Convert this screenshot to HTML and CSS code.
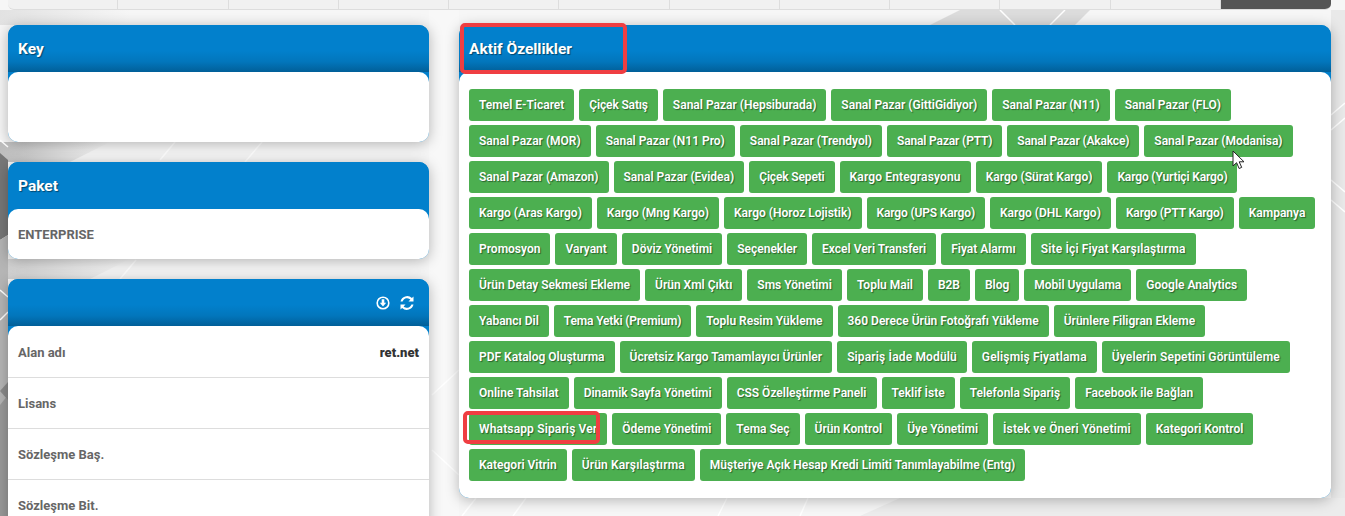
FILE: index.html
```html
<!DOCTYPE html>
<html lang="tr">
  <head>
    <meta charset="UTF-8">
    <meta name="viewport" content="width=device-width, initial-scale=1.0">
    <title>Aktif Özellikler</title>
    <link rel="stylesheet" href="styles.css">
  </head>
  <body>
    <svg class="backdrop" viewBox="0 0 1345 516" aria-hidden="true">
      <defs>
        <linearGradient id="fade" x1="0" x2="1" y1="0" y2="0">
          <stop offset="0" stop-color="#bdbdbd"/>
          <stop offset="1" stop-color="#f6f6f6"/>
        </linearGradient>
      </defs>
      <polygon points="0,10 130,10 130,25 0,25" fill="url(#fade)" opacity="0.35"/>
      <polygon points="0,142 110,142 70,162 0,162" fill="url(#fade)"/>
      <polygon points="0,259 130,259 90,279 0,279" fill="url(#fade)" opacity="0.7"/>
      <polygon points="0,153 8,160 8,235 0,240" fill="#777"/>
      <polygon points="0,240 8,235 8,516 0,516" fill="#b5b5b5"/>
      <polygon points="0,405 8,395 8,516 0,516" fill="#999"/>
      <polygon points="0,391 8,382 8,400" fill="#8a8a8a"/>
      <polygon points="960,10 1090,10 1075,25 930,25" fill="#dcdcdc"/>
      <polygon points="1331,10 1345,10 1345,516 1331,516" fill="#e9e9e9"/>
      <polygon points="429,10 459,10 459,516 429,516" fill="#f8f8f8"/>
      <polygon points="900,498 1345,498 1345,516 860,516" fill="#ececec"/>
      <g stroke="#fff" stroke-width="1.5" fill="none">
        <path d="M1331 115 L1345 103"/>
        <path d="M1331 130 L1345 118"/>
        <path d="M1331 180 L1345 192"/>
        <path d="M1331 200 L1345 212"/>
        <path d="M0 290 L8 297"/>
        <path d="M0 320 L8 312"/>
        <path d="M0 140 L8 147"/>
        <path d="M1000 10 L1015 25"/>
        <path d="M1050 25 L1065 10"/>
        <path d="M160 160 L175 142"/>
        <path d="M245 162 L262 142"/>
        <path d="M120 279 L136 260"/>
        <path d="M432 395 L459 370"/>
        <path d="M432 450 L459 475"/>
        <path d="M462 516 L476 498"/>
        <path d="M513 516 L526 498"/>
        <path d="M718 516 L727 498"/>
        <path d="M800 516 L808 498"/>
      </g>
    </svg>

    <div class="topbar">
      <div class="topbar-cell"></div>
      <div class="topbar-cell"></div>
      <div class="topbar-cell"></div>
      <div class="topbar-cell"></div>
      <div class="topbar-cell"></div>
      <div class="topbar-cell"></div>
      <div class="topbar-cell"></div>
      <div class="topbar-cell"></div>
      <div class="topbar-cell"></div>
      <div class="topbar-cell"></div>
      <div class="topbar-cell"></div>
      <div class="topbar-cell dark"></div>
    </div>

    <main class="page">
      <aside class="side">
        <section class="card">
          <div class="card-head"><h3>Key</h3></div>
          <div class="card-body key-body"></div>
        </section>

        <section class="card">
          <div class="card-head flat"><h3>Paket</h3></div>
          <div class="card-body paket-body">ENTERPRISE</div>
        </section>

        <section class="card">
          <div class="card-head icons">
            <svg class="icon" viewBox="0 0 16 16">
              <circle cx="8" cy="8" r="5.800" fill="none" stroke="#fff" stroke-width="1.600"/>
              <path d="M6.700 4.200h2.600v3.600h1.900L8 11.600 4.800 7.800h1.900z" fill="#fff"/>
            </svg>
            <svg class="icon" viewBox="0 0 16 16">
              <path d="M14.500 1.500v5h-5l1.900-1.900A4.700 4.700 0 0 0 3.600 6.500H1.500A6.800 6.800 0 0 1 12.900 3.100z" fill="#fff"/>
              <path d="M1.500 14.500v-5h5l-1.900 1.900a4.700 4.700 0 0 0 7.800-1.900h2.100A6.800 6.800 0 0 1 3.100 12.900z" fill="#fff"/>
            </svg>
          </div>
          <div class="card-body rows">
            <div class="row"><span>Alan adı</span><b>ret.net</b></div>
            <div class="row"><span>Lisans</span></div>
            <div class="row"><span>Sözleşme Baş.</span></div>
            <div class="row"><span>Sözleşme Bit.</span></div>
          </div>
        </section>
      </aside>

      <section class="card features">
        <div class="card-head"><h3>Aktif Özellikler</h3></div>
        <div class="card-body tags">
          <a class="tag">Temel E-Ticaret</a>
          <a class="tag tight">Çiçek Satış</a>
          <a class="tag">Sanal Pazar (Hepsiburada)</a>
          <a class="tag">Sanal Pazar (GittiGidiyor)</a>
          <a class="tag">Sanal Pazar (N11)</a>
          <a class="tag">Sanal Pazar (FLO)</a>
          <a class="tag">Sanal Pazar (MOR)</a>
          <a class="tag">Sanal Pazar (N11 Pro)</a>
          <a class="tag">Sanal Pazar (Trendyol)</a>
          <a class="tag tight">Sanal Pazar (PTT)</a>
          <a class="tag tight">Sanal Pazar (Akakce)</a>
          <a class="tag">Sanal Pazar (Modanisa)</a>
          <a class="tag">Sanal Pazar (Amazon)</a>
          <a class="tag">Sanal Pazar (Evidea)</a>
          <a class="tag tight">Çiçek Sepeti</a>
          <a class="tag wide">Kargo Entegrasyonu</a>
          <a class="tag">Kargo (Sürat Kargo)</a>
          <a class="tag tight">Kargo (Yurtiçi Kargo)</a>
          <a class="tag">Kargo (Aras Kargo)</a>
          <a class="tag">Kargo (Mng Kargo)</a>
          <a class="tag">Kargo (Horoz Lojistik)</a>
          <a class="tag tight">Kargo (UPS Kargo)</a>
          <a class="tag">Kargo (DHL Kargo)</a>
          <a class="tag tight">Kargo (PTT Kargo)</a>
          <a class="tag">Kampanya</a>
          <a class="tag">Promosyon</a>
          <a class="tag">Varyant</a>
          <a class="tag">Döviz Yönetimi</a>
          <a class="tag">Seçenekler</a>
          <a class="tag">Excel Veri Transferi</a>
          <a class="tag">Fiyat Alarmı</a>
          <a class="tag wide">Site İçi Fiyat Karşılaştırma</a>
          <a class="tag">Ürün Detay Sekmesi Ekleme</a>
          <a class="tag">Ürün Xml Çıktı</a>
          <a class="tag">Sms Yönetimi</a>
          <a class="tag">Toplu Mail</a>
          <a class="tag">B2B</a>
          <a class="tag">Blog</a>
          <a class="tag">Mobil Uygulama</a>
          <a class="tag">Google Analytics</a>
          <a class="tag">Yabancı Dil</a>
          <a class="tag tight">Tema Yetki (Premium)</a>
          <a class="tag">Toplu Resim Yükleme</a>
          <a class="tag">360 Derece Ürün Fotoğrafı Yükleme</a>
          <a class="tag">Ürünlere Filigran Ekleme</a>
          <a class="tag">PDF Katalog Oluşturma</a>
          <a class="tag">Ücretsiz Kargo Tamamlayıcı Ürünler</a>
          <a class="tag wide">Sipariş İade Modülü</a>
          <a class="tag wide">Gelişmiş Fiyatlama</a>
          <a class="tag wide">Üyelerin Sepetini Görüntüleme</a>
          <a class="tag">Online Tahsilat</a>
          <a class="tag">Dinamik Sayfa Yönetimi</a>
          <a class="tag">CSS Özelleştirme Paneli</a>
          <a class="tag">Teklif İste</a>
          <a class="tag">Telefonla Sipariş</a>
          <a class="tag">Facebook ile Bağlan</a>
          <a class="tag wide">Whatsapp Sipariş Ver</a>
          <a class="tag">Ödeme Yönetimi</a>
          <a class="tag">Tema Seç</a>
          <a class="tag">Ürün Kontrol</a>
          <a class="tag">Üye Yönetimi</a>
          <a class="tag wide">İstek ve Öneri Yönetimi</a>
          <a class="tag">Kategori Kontrol</a>
          <a class="tag">Kategori Vitrin</a>
          <a class="tag wide">Ürün Karşılaştırma</a>
          <a class="tag">Müşteriye Açık Hesap Kredi Limiti Tanımlayabilme (Entg)</a>
        </div>
      </section>
    </main>

    <!-- red marks drawn over the screenshot -->
    <div class="mark mark-title"></div>
    <div class="mark mark-whatsapp"></div>
    <svg class="cursor" viewBox="0 0 13 20">
      <path d="M1 1v15l3.600-3.300 2.500 5.800 2.600-1.100-2.500-5.600h4.800z" fill="#fff" stroke="#222" stroke-width="1"/>
    </svg>
  </body>
</html>
```

FILE: styles.css
```css
html, body {
  height: 516px;
  overflow: hidden;
}

body {
  margin: 0;
  padding: 0 14px 0 8px;
  position: relative;
  background-color: #f6f6f6;
  font-family: "Roboto", sans-serif;
  font-weight: 700;
  color: #666;
}

.backdrop {
  position: absolute;
  top: 0;
  left: 0;
  width: 1345px;
  height: 516px;
}

.topbar {
  position: relative;
  display: grid;
  grid-template-columns: repeat(12, 1fr);
  height: 9px;
  border-radius: 0 0 6px 6px;
  overflow: hidden;
  background-color: #f1f1f1;
  border-bottom: 1px solid #ddd;
}

.topbar-cell {
  border-right: 1px solid #ddd;
}

.topbar-cell.dark {
  background-color: #555;
  border-right: 0;
}

.page {
  position: relative;
  display: flex;
  align-items: flex-start;
  gap: 30px;
  margin-top: 15px;
}

.side {
  width: 421px;
  flex: none;
  display: flex;
  flex-direction: column;
  gap: 20px;
}

.card {
  border-radius: 10px;
  background-color: #0280cc;
  box-shadow: 0 2px 14px rgba(0, 0, 0, 0.28);
}

.card-head {
  display: flex;
  align-items: center;
  height: 47px;
  box-sizing: border-box;
  padding: 0 10px;
  border-radius: 10px 10px 0 0;
  background: linear-gradient(to bottom, #0280cc 55%, #0276bc 78%, #015f98 100%);
}

.card-head.flat {
  background: #0280cc;
}

.card-head.icons {
  justify-content: flex-end;
  gap: 8px;
  padding: 0 14px 0 0;
}

.card-head h3 {
  margin: 1px 0 0;
  font-size: 15.500px;
  font-weight: 700;
  color: #fff;
  text-shadow: 1px 1px 1px rgba(0, 0, 0, 0.45);
}

.icon {
  width: 16px;
  height: 16px;
}

.card-body {
  background-color: #fff;
  border-radius: 10px;
  font-size: 13px;
}

.key-body {
  height: 70px;
}

.paket-body {
  height: 50px;
  box-sizing: border-box;
  padding: 17px 10px 0;
  line-height: 17px;
}

.features {
  width: 872px;
  flex: none;
}

.rows {
  padding-top: 1px;
}

.row {
  display: flex;
  justify-content: space-between;
  align-items: center;
  height: 50px;
  padding: 0 10px;
  border-bottom: 1px solid #ddd;
}

.row b {
  color: #333;
}

.tags {
  display: flex;
  flex-wrap: wrap;
  align-content: flex-start;
  gap: 4px 5px;
  height: 426px;
  box-sizing: border-box;
  padding: 17px 10px 0;
}

.tag {
  display: block;
  height: 32px;
  line-height: 32px;
  padding: 0 10px;
  border-radius: 3px;
  background-color: #4caf50;
  color: #fff;
  font-size: 12px;
  font-weight: 600;
  white-space: nowrap;
  text-shadow: 1px 1px 1px rgba(0, 0, 0, 0.45);
}

.tag.tight {
  letter-spacing: -0.15px;
}

.tag.wide {
  letter-spacing: 0.15px;
}

.mark {
  position: absolute;
  box-sizing: border-box;
  border: 4px solid #ef3e42;
  border-radius: 5px;
}

.mark-title {
  left: 460px;
  top: 23px;
  width: 167px;
  height: 51px;
}

.mark-whatsapp {
  left: 463px;
  top: 411px;
  width: 137px;
  height: 33px;
}

.cursor {
  position: absolute;
  left: 1232px;
  top: 150px;
  width: 13px;
  height: 20px;
}
```
